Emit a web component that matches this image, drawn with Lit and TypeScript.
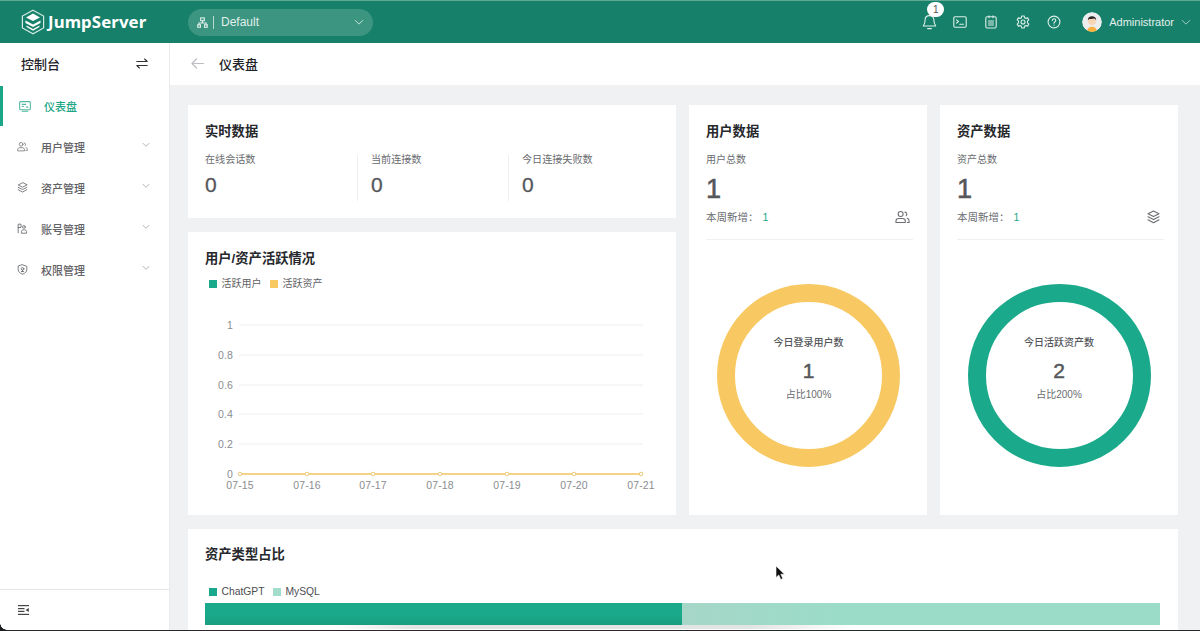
import { LitElement, html, css, svg } from "lit";
import { customElement } from "lit/decorators.js";

const chevron = (cls = "chev") => html`<svg class=${cls} viewBox="0 0 12 8" fill="none" stroke="currentColor" stroke-width="1" stroke-linecap="round"><path d="M1.5 1.5 6 6l4.5-4.5"/></svg>`;

const usersIcon = (cls: string) => html`<svg class=${cls} viewBox="0 0 16 14" fill="none" stroke="currentColor" stroke-width="1.1" stroke-linecap="round" stroke-linejoin="round"><circle cx="6" cy="3.8" r="2.7"/><path d="M1 12.8v-1.3c0-1.6 1.5-2.8 3-2.8h4c1.6 0 3 1.2 3 2.8v1.3z"/><path d="M10.6 1.8a2.2 2.2 0 0 1 1.2 3.9"/><path d="M13 8.4c1.2.4 2 1.3 2 2.6v1.800h-1.800"/></svg>`;
const layersIcon = (cls: string) => html`<svg class=${cls} viewBox="0 0 14 14" fill="none" stroke="currentColor" stroke-width="1.1" stroke-linecap="round" stroke-linejoin="round"><path d="M7 1 1.500 3.800 7 6.600l5.500-2.800z"/><path d="M1.500 6.800 7 9.600l5.500-2.800"/><path d="M1.500 9.800 7 12.800l5.500-3"/></svg>`;
const accountIcon = (cls: string) => html`<svg class=${cls} viewBox="0 0 14 14" fill="none" stroke="currentColor" stroke-width="1.1" stroke-linecap="round" stroke-linejoin="round"><path d="M1.500 12.500v-11h3.600v4.200H1.500"/><circle cx="8.800" cy="5" r="1.800"/><path d="M5.600 12.500v-1.600c0-1.300 1-2.200 2.200-2.200h2c1.300 0 2.400 1 2.400 2.200v1.600z"/></svg>`;
const shieldIcon = (cls: string) => html`<svg class=${cls} viewBox="0 0 14 14" fill="none" stroke="currentColor" stroke-width="1.1" stroke-linecap="round" stroke-linejoin="round"><path d="M7 1 12.500 3v4c0 3-2.400 5-5.500 6-3.100-1-5.500-3-5.500-6V3z"/><circle cx="7" cy="6.200" r="1.700"/><path d="M5.600 9.600h2.800M7 7.900v1.700"/></svg>`;

const xs = [240, 307, 373, 440, 507, 574, 641];
const days = ["07-15", "07-16", "07-17", "07-18", "07-19", "07-20", "07-21"];
const ys: [string, number][] = [["1", 325], ["0.8", 355], ["0.6", 385], ["0.4", 414], ["0.2", 444], ["0", 474]];
const OX = 188;
const OY = 300;

@customElement("app-root")
export class AppRoot extends LitElement {
  static styles = css`
    :host { display: block; height: 631px; overflow: hidden; position: relative; background: #f0f1f3; font-family: "Liberation Sans", "Noto Sans CJK SC", sans-serif; color: #303133; }
    .top { height: 43px; background: #17806a; border-top: 1px solid #5fa996; color: #fff; display: flex; align-items: center; padding-left: 21px; box-sizing: border-box; }
    .logo { width: 24px; height: 26px; flex: none; }
    .brand { font-family: "Noto Sans", sans-serif; font-weight: 700; font-size: 16.8px; margin-left: 3px; letter-spacing: .1px; width: 140px; flex: none; line-height: 42px; }
    .org { width: 185px; height: 27px; border-radius: 14px; background: #3b9580; display: flex; align-items: center; box-sizing: border-box; padding: 0 9px 0 9px; font-size: 12px; color: #e0efeb; flex: none; }
    .org svg.tree { width: 11px; height: 11px; flex: none; }
    .org i { width: 1px; height: 13px; background: #b7d9d0; margin: 0 7px 0 5px; }
    .org .sp { flex: 1; }
    .org .chev { width: 10px; height: 7px; margin-right: 0; }
    .spacer { flex: 1; }
    .tools { display: flex; align-items: center; height: 100%; color: #dcefe9; }
    .ti { width: 14px; height: 14px; margin-right: 17.5px; display: block; }
    .bell { position: relative; width: 15px; height: 16px; margin-right: 15.5px; }
    .bell svg { width: 15px; height: 16px; display: block; }
    .badge { position: absolute; left: 5px; top: -12px; width: 17px; height: 15px; line-height: 15px; border-radius: 8px; background: #fff; color: #555; font-size: 10px; text-align: center; }
    .avatar { width: 20px; height: 20px; margin-left: 3.5px; margin-right: 7px; border-radius: 50%; display: block; }
    .uname { font-size: 11px; color: #e3f0ec; margin-right: 7px; white-space: nowrap; }
    .tools .chev { width: 10px; height: 7px; margin-right: 9px; color: #bcdad2; }

    .main { display: flex; height: 588px; }
    .side { width: 170px; flex: none; background: #fff; border-right: 1px solid #e9eaec; box-sizing: border-box; display: flex; flex-direction: column; }
    .sh { height: 43px; display: flex; align-items: center; justify-content: space-between; padding: 0 21px 3px; box-sizing: border-box; font-size: 13px; font-weight: 500; color: #1f2329; flex: none; }
    .sh svg { width: 12px; height: 11px; color: #333; }
    .menu { flex: 1; padding-top: 0; }
    .mi { height: 41px; display: flex; align-items: center; padding-left: 17px; font-size: 11px; color: #5f6165; font-weight: 500; position: relative; }
    .mi svg.ic { width: 11px; height: 11px; margin-right: 13px; color: #6a6c70; flex: none; }
    .mi .chev { position: absolute; right: 19px; top: 16px; width: 8px; height: 6px; color: #8d8f93; }
    .mi.on { color: #1aa586; height: 40px; border-left: 3px solid #1ba787; padding-left: 16px; }
    .mi.on svg.ic { color: #56b9a3; margin-right: 13px; width: 12px; height: 12px; }
    .foot { height: 40px; border-top: 1px solid #e6e7e9; display: flex; align-items: center; padding-left: 18px; flex: none; margin-bottom: 1px; }
    .foot svg { width: 11px; height: 10px; color: #444; }

    .right { flex: 1; min-width: 0; display: flex; flex-direction: column; }
    .bread { height: 42px; flex: none; background: #fff; display: flex; align-items: center; padding: 0 0 2px 21px; box-sizing: border-box; font-size: 13px; font-weight: 500; color: #1f2329; }
    .bread svg { width: 13px; height: 11px; color: #bdbec2; margin-right: 15px; }
    .content { padding: 20px 22px 0 18px; display: grid; grid-template-columns: 488px 238px 238px; grid-template-rows: 113px 283px 103px; gap: 14px 13px; }
    .card { background: #fff; padding: 0 17px; box-sizing: border-box; min-width: 0; position: relative; }
    .title { font-size: 13.3px; font-weight: 600; line-height: 18px; padding-top: 18px; color: #26282c; }
    .rt { grid-column: 1; grid-row: 1; }
    .stats { display: flex; margin-top: 12px; }
    .stat { font-size: 10.1px; color: #6a6c70; line-height: 14px; position: relative; box-sizing: border-box; flex: none; width: 151px; padding-left: 14px; }
    .stat:first-child { width: 152px; padding-left: 0; }
    .stat + .stat::before { content: ""; position: absolute; left: 0; top: 2px; height: 46px; width: 1px; background: #eceef0; }
    .stat b { display: block; font-size: 21px; font-weight: 400; -webkit-text-stroke: .3px #55575b; color: #55575b; line-height: 24px; margin-top: 6px; }
    .act { grid-column: 1; grid-row: 2; }
    .legend { display: flex; align-items: center; font-size: 10px; color: #5f6165; margin-top: 9px; line-height: 14px; padding-left: 4px; }
    .sw { width: 8px; height: 8px; margin-right: 4.5px; flex: none; }
    .sw.g { background: #1aa98a; }
    .sw.y { background-color: #f8c963; background-image: radial-gradient(circle, #b9813a .6px, transparent .7px); background-size: 2px 2px; }
    .sw.m { background: #a3dccb; }
    .lg { margin-right: 8.5px; }
    .chart { position: absolute; left: 0; top: 68px; width: 488px; height: 215px; display: block; }
    .chart text { font-family: "Liberation Sans", sans-serif; font-size: 10.5px; letter-spacing: .15px; fill: #8a8c90; }
    .us { grid-row: 1 / span 2; }
    .sub { font-size: 10px; color: #6a6c70; margin-top: 12px; line-height: 14px; }
    .big { font-size: 27px; line-height: 30px; color: #55575b; font-weight: 400; -webkit-text-stroke: .6px #55575b; margin-top: 7px; }
    .weekly { display: flex; align-items: center; font-size: 10.5px; color: #6a6c70; margin-top: 6px; height: 14px; line-height: 14px; }
    .weekly em { font-style: normal; color: #1aa586; margin-left: 4px; }
    .weekly .sp { flex: 1; }
    .weekly svg { width: 15px; height: 14px; color: #6a6c70; margin-right: 0; }
    .rule { height: 1px; background: #eef0f1; margin-top: 15px; margin-right: -3px; }
    .ring { position: absolute; left: 28px; top: 179px; width: 183px; height: 183px; border-radius: 50%; border: 18px solid #f8c963; box-sizing: border-box; display: flex; flex-direction: column; align-items: center; text-align: center; }
    .ring.green { left: 27.5px; border-color: #1aa98a; }
    .ring .rt1 { font-size: 10px; font-weight: 500; color: #55575b; margin-top: 34px; line-height: 14px; }
    .ring .rn { font-size: 21px; color: #55575b; line-height: 24px; margin-top: 9px; -webkit-text-stroke: .5px #55575b; }
    .ring .rp { font-size: 10px; color: #6a6c70; line-height: 14px; margin-top: 5px; }
    .types { grid-column: 1 / span 3; grid-row: 3; }
    .types .title { padding-top: 17px; }
    .types .legend { margin-top: 21px; color: #4b4d51; font-size: 10.3px; }
    .bar { display: flex; height: 22px; margin-top: 4px; width: 955px; }
    .bar .a { width: 477px; background: linear-gradient(180deg, #1aa98a 55%, #199c80 100%); }
    .bar .b { flex: 1; background: linear-gradient(90deg, #a6d6c7 0%, #9adcc8 35%); }
    .under { height: 4px; width: 520px; margin-left: 130px; background: linear-gradient(90deg, transparent, #e3e4e4 15%, #e3e4e4 80%, transparent); }
    .cursor { position: absolute; left: 775px; top: 565px; width: 10px; height: 16px; }
    .edge { position: absolute; left: 0; right: 0; bottom: 0; height: 1px; background: #26282a; }
    .corner { position: absolute; left: 0; bottom: 0; width: 7px; height: 8px; background: radial-gradient(circle at 100% 0, transparent 6.5px, #1d1e20 7px); }
  `;

  private chart() {
    return svg`
      ${ys.map(([l, y]) => svg`<line x1=${239 - OX} x2=${643 - OX} y1=${y - OY} y2=${y - OY} stroke="#eceef0" stroke-width="1"></line>
        <text x=${233 - OX} y=${y - OY + 4} text-anchor="end">${l}</text>`)}
      <line x1=${240 - OX} x2=${641 - OX} y1=${474 - OY} y2=${474 - OY} stroke="#f3c765" stroke-width="1.6"></line>
      ${xs.map((x, i) => svg`<circle cx=${x - OX} cy=${474 - OY} r="1.8" fill="#fff" stroke="#edc877" stroke-width="1"></circle>
        <text x=${x - OX} y=${489 - OY} text-anchor="middle">${days[i]}</text>`)}
    `;
  }

  render() {
    const items: [string, (c: string) => unknown][] = [["用户管理", usersIcon], ["资产管理", layersIcon], ["账号管理", accountIcon], ["权限管理", shieldIcon]];
    return html`
      <div class="top">
        <svg class="logo" viewBox="0 0 24 26" fill="none">
          <path d="M12 1.2 22.6 7v12L12 24.8 1.4 19V7z" stroke="#d5ebe5" stroke-width="1.2"/>
          <path d="M12 4.5 19 8.4l-7 3.7-7-3.7z" fill="#fff"/>
          <path d="M4.5 11.5 12 15.5l7.5-4v2.4L12 18l-7.5-4.1z" fill="#fff"/>
          <path d="M5.5 16.5 12 20l6.5-3.5v1.6L12 21.8 5.5 18.1z" fill="#fff"/>
        </svg>
        <div class="brand">JumpServer</div>
        <div class="org">
          <svg class="tree" viewBox="0 0 12 12" fill="none" stroke="currentColor" stroke-width="1.2"><rect x="4" y="1" width="4" height="3"/><path d="M6 4v2.5M2 9V6.5h8V9"/><rect x=".8" y="8.5" width="3" height="2.7"/><rect x="8.2" y="8.5" width="3" height="2.7"/></svg>
          <i></i><span>Default</span><span class="sp"></span>${chevron()}
        </div>
        <div class="spacer"></div>
        <div class="tools">
          <div class="bell">
            <svg viewBox="0 0 15 16" fill="none" stroke="currentColor" stroke-width="1.1" stroke-linecap="round" stroke-linejoin="round"><path d="M7.5 1.6c-2.8 0-4.4 2-4.4 4.5 0 3-1 4.9-1.8 5.9h12.4c-.8-1-1.8-2.9-1.8-5.9 0-2.5-1.6-4.5-4.4-4.5z"/><path d="M5.6 14.6h3.8"/></svg>
            <div class="badge">1</div>
          </div>
          <svg class="ti" viewBox="0 0 14 14" fill="none" stroke="currentColor" stroke-width="1.1" stroke-linecap="round" stroke-linejoin="round"><rect x=".8" y="1.8" width="12.4" height="10.4" rx="1.2"/><path d="m3.5 4.8 2 1.7-2 1.7M6.8 9.3h3.6"/></svg>
          <svg class="ti" viewBox="0 0 14 14" fill="none" stroke="currentColor" stroke-width="1.1" stroke-linecap="round" stroke-linejoin="round"><rect x="1.8" y="1.8" width="10.4" height="11.2" rx="1.4"/><path d="M5 .8v2M9 .8v2M4.5 6h5M4.5 8h5M4.5 10h5"/></svg>
          <svg class="ti" viewBox="0 0 14 14" fill="none" stroke="currentColor" stroke-width="1.1" stroke-linejoin="round"><path d="M5.8 1h2.400l.4 1.700 1.300.7 1.700-.5 1.200 2-1.300 1.300v1.600l1.300 1.300-1.200 2-1.700-.5-1.300.7L8.200 13H5.800l-.4-1.700-1.300-.7-1.700.5-1.200-2 1.300-1.300V6.200L1.200 4.900l1.200-2 1.700.5 1.300-.7z"/><circle cx="7" cy="7" r="2"/></svg>
          <svg class="ti" viewBox="0 0 14 14" fill="none" stroke="currentColor" stroke-width="1.1" stroke-linecap="round"><circle cx="7" cy="7" r="5.9"/><path d="M5.3 5.5c0-1 .8-1.700 1.700-1.700 1 0 1.800.7 1.800 1.600 0 1.400-1.800 1.400-1.800 2.900"/><path d="M7 10.100v.1"/></svg>
          <svg class="avatar" viewBox="0 0 20 20">
            <circle cx="10" cy="10" r="10" fill="#eceded"/>
            <path d="M5 20c.3-3.800 2.200-5.200 5-5.200s4.700 1.400 5 5.200z" fill="#f6b23d"/>
            <circle cx="10" cy="9" r="3.900" fill="#f6d4b6"/>
            <path d="M5.800 8.500C5.800 5.500 7.500 4.300 10 4.300s4.200 1.200 4.200 4.200c-.8-1.500-1.500-1.900-2.200-2-1.500.6-3.500.6-4.300.2-.9.4-1.500 1-1.900 1.800z" fill="#2a2526"/>
          </svg>
          <span class="uname">Administrator</span>
          ${chevron()}
        </div>
      </div>
      <div class="main">
        <aside class="side">
          <div class="sh"><span>控制台</span>
            <svg viewBox="0 0 12 11" fill="none" stroke="currentColor" stroke-width="1.1" stroke-linecap="round" stroke-linejoin="round"><path d="M.8 3.500h10.400L8.600 1M11.200 7.500H.8L3.400 10"/></svg>
          </div>
          <div class="menu">
            <div class="mi on">
              <svg class="ic" viewBox="0 0 11 11" fill="none" stroke="currentColor" stroke-width="1"><rect x=".6" y="1.500" width="9.800" height="7.500" rx="1"/><path d="M2.500 4h4M2.500 6h2M6.500 6.500h2"/><path d="M2.500 10.300h6"/></svg>
              <span>仪表盘</span>
            </div>
            ${items.map(([t, ic]) => html`<div class="mi">${ic("ic")}<span>${t}</span>${chevron()}</div>`)}
          </div>
          <div class="foot">
            <svg viewBox="0 0 11 10" fill="currentColor"><rect x="0" y="0" width="11" height="1.200"/><rect x="0" y="3" width="6.500" height="1.200"/><rect x="0" y="5.800" width="6.500" height="1.200"/><rect x="0" y="8.800" width="11" height="1.200"/><path d="M7.500 5 10.800 3v4z"/></svg>
          </div>
        </aside>
        <div class="right">
          <div class="bread">
            <svg viewBox="0 0 13 11" fill="none" stroke="currentColor" stroke-width="1.200" stroke-linecap="round" stroke-linejoin="round"><path d="M12.500 5.500H1M5.500 1 1 5.500 5.500 10"/></svg>
            <span>仪表盘</span>
          </div>
          <div class="content">
            <section class="card rt">
              <div class="title">实时数据</div>
              <div class="stats">
                <div class="stat">在线会话数<b>0</b></div>
                <div class="stat">当前连接数<b>0</b></div>
                <div class="stat">今日连接失败数<b>0</b></div>
              </div>
            </section>
            <section class="card act">
              <div class="title">用户/资产活跃情况</div>
              <div class="legend">
                <span class="sw g"></span><span class="lg">活跃用户</span>
                <span class="sw y"></span><span>活跃资产</span>
              </div>
              <svg class="chart" viewBox="0 0 488 215">${this.chart()}</svg>
            </section>
            <section class="card us">
              <div class="title">用户数据</div>
              <div class="sub">用户总数</div>
              <div class="big">1</div>
              <div class="weekly"><span>本周新增：</span><em>1</em><span class="sp"></span>${usersIcon("")}</div>
              <div class="rule"></div>
              <div class="ring">
                <div class="rt1">今日登录用户数</div>
                <div class="rn">1</div>
                <div class="rp">占比100%</div>
              </div>
            </section>
            <section class="card us">
              <div class="title">资产数据</div>
              <div class="sub">资产总数</div>
              <div class="big">1</div>
              <div class="weekly"><span>本周新增：</span><em>1</em><span class="sp"></span>${layersIcon("")}</div>
              <div class="rule"></div>
              <div class="ring green">
                <div class="rt1">今日活跃资产数</div>
                <div class="rn">2</div>
                <div class="rp">占比200%</div>
              </div>
            </section>
            <section class="card types">
              <div class="title">资产类型占比</div>
              <div class="legend">
                <span class="sw g"></span><span class="lg">ChatGPT</span>
                <span class="sw m"></span><span>MySQL</span>
              </div>
              <div class="bar"><div class="a"></div><div class="b"></div></div>
              <div class="under"></div>
            </section>
          </div>
        </div>
      </div>
      <svg class="cursor" viewBox="0 0 10 16"><path d="M1 1v11.500l2.800-2.500 2 4.500 2-.9-2-4.400h3.700z" fill="#111" stroke="#fff" stroke-width=".6"/></svg>
      <div class="edge"></div>
      <div class="corner"></div>
    `;
  }
}
